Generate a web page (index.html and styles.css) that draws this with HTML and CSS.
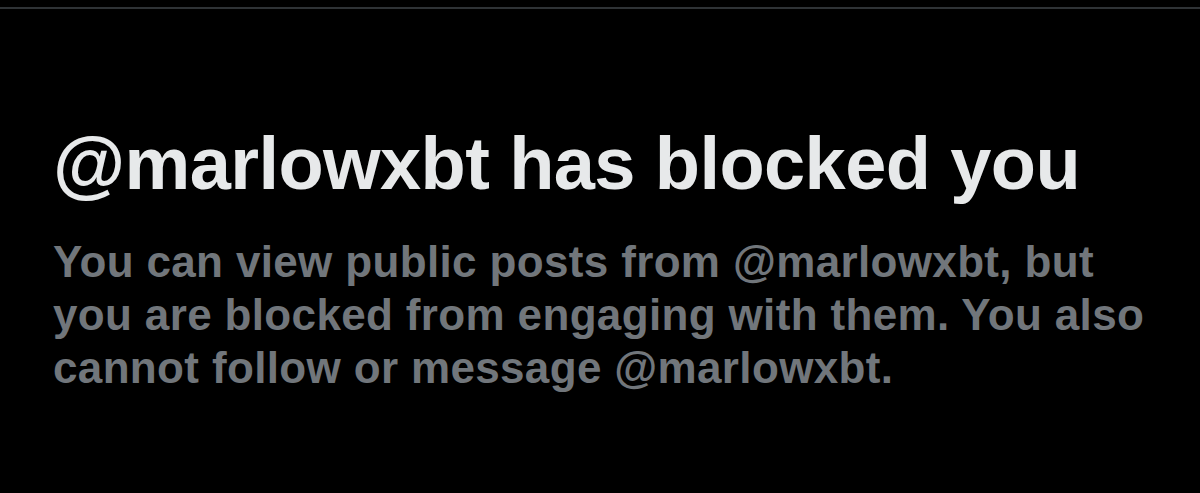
FILE: index.html
```html
<!DOCTYPE html>
<html lang="en">
<head>
    <meta charset="UTF-8">
    <title>Blocked</title>
    <link rel="stylesheet" href="styles.css">
</head>
<body>
    <div class="divider"></div>
    <main class="blocked">
        <h1 class="blocked-title">@marlowxbt has blocked you</h1>
        <p class="blocked-text">You can view public posts from @marlowxbt, but you are blocked from engaging with them. You also cannot follow or message @marlowxbt.</p>
    </main>
</body>
</html>
```
FILE: styles.css
```css
body {
    margin: 0;
    padding: 0;
    background-color: #000;
    font-family: 'Liberation Sans', Arial, sans-serif;
}

.divider {
    margin-top: 7px;
    height: 2px;
    background-color: #2f3336;
}

.blocked {
    padding: 0 40px 0 53px;
    max-width: 1110px;
}

.blocked-title {
    margin: 115px 0 0 0;
    font-size: 74px;
    line-height: 80px;
    font-weight: bold;
    color: #e7e9ea;
    letter-spacing: -0.6px;
}

.blocked-text {
    margin: 31px 0 0 0;
    font-size: 44px;
    line-height: 53px;
    font-weight: bold;
    color: #71767b;
    letter-spacing: 0.35px;
}
```
